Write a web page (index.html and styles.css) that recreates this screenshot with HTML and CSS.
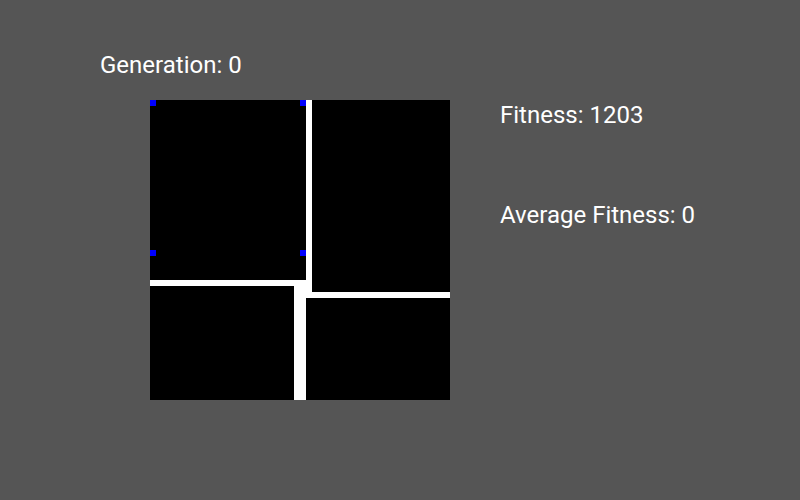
FILE: index.html
```html
<!DOCTYPE html>
<html>
<head>
<meta charset="utf-8">
<link rel="stylesheet" href="styles.css">
</head>
<body>
<div class="page">
  <div class="gen">Generation: 0</div>
  <div class="main">
    <svg class="board" width="300" height="300" viewBox="0 0 300 300" shape-rendering="crispEdges">
      <rect x="0" y="0" width="300" height="300" fill="#000"/>
      <rect x="156" y="0" width="6" height="198" fill="#fff"/>
      <rect x="0" y="180" width="156" height="6" fill="#fff"/>
      <rect x="144" y="186" width="12" height="114" fill="#fff"/>
      <rect x="162" y="192" width="138" height="6" fill="#fff"/>
      <rect x="0" y="0" width="6" height="6" fill="#00f"/>
      <rect x="150" y="0" width="6" height="6" fill="#00f"/>
      <rect x="0" y="150" width="6" height="6" fill="#00f"/>
      <rect x="150" y="150" width="6" height="6" fill="#00f"/>
    </svg>
    <div class="stats">
      <div class="stat">Fitness: 1203</div>
      <div class="stat">Average Fitness: 0</div>
    </div>
  </div>
</div>
</body>
</html>
```

FILE: styles.css
```css
html, body {
  margin: 0;
  padding: 0;
  background: #555555;
}
.page {
  width: 800px;
  height: 500px;
  box-sizing: border-box;
  padding: 53px 0 0 100px;
  color: #ffffff;
  font-family: Roboto, "Liberation Sans", sans-serif;
  font-size: 24px;
  line-height: 24px;
}
.gen {
  height: 24px;
  margin-bottom: 23px;
}
.main {
  display: flex;
  margin-left: 50px;
}
.board {
  display: block;
  flex: none;
}
.stats {
  margin-left: 50px;
  padding-top: 3px;
  display: flex;
  flex-direction: column;
  gap: 76px;
}
.stat {
  height: 24px;
}
```
